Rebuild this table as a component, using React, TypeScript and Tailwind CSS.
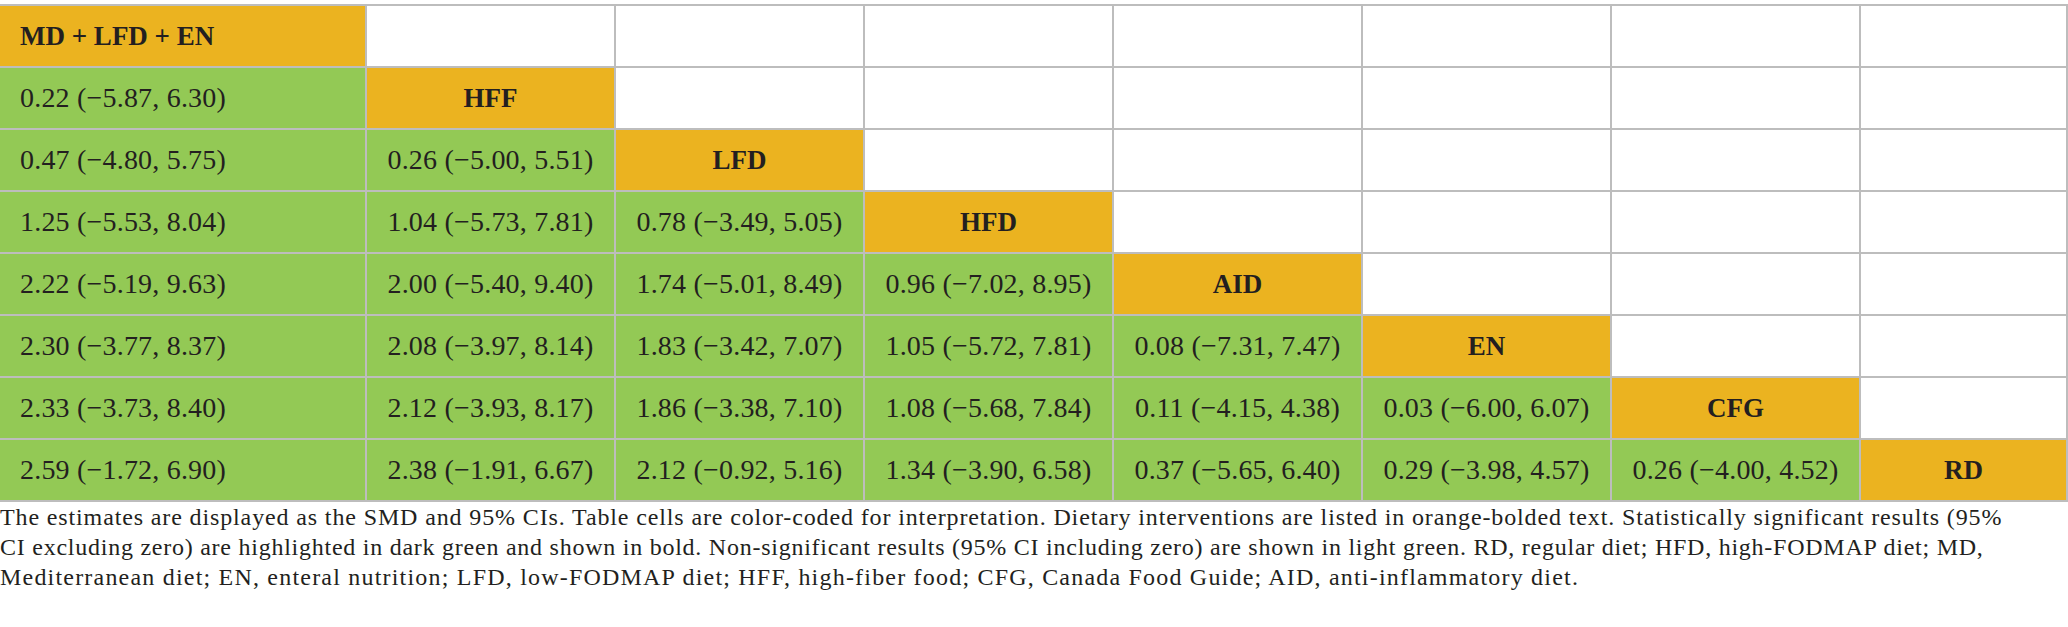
const rows: string[][] = [
  [],
  ["0.22 (−5.87, 6.30)"],
  ["0.47 (−4.80, 5.75)", "0.26 (−5.00, 5.51)"],
  ["1.25 (−5.53, 8.04)", "1.04 (−5.73, 7.81)", "0.78 (−3.49, 5.05)"],
  ["2.22 (−5.19, 9.63)", "2.00 (−5.40, 9.40)", "1.74 (−5.01, 8.49)", "0.96 (−7.02, 8.95)"],
  ["2.30 (−3.77, 8.37)", "2.08 (−3.97, 8.14)", "1.83 (−3.42, 7.07)", "1.05 (−5.72, 7.81)", "0.08 (−7.31, 7.47)"],
  ["2.33 (−3.73, 8.40)", "2.12 (−3.93, 8.17)", "1.86 (−3.38, 7.10)", "1.08 (−5.68, 7.84)", "0.11 (−4.15, 4.38)", "0.03 (−6.00, 6.07)"],
  ["2.59 (−1.72, 6.90)", "2.38 (−1.91, 6.67)", "2.12 (−0.92, 5.16)", "1.34 (−3.90, 6.58)", "0.37 (−5.65, 6.40)", "0.29 (−3.98, 4.57)", "0.26 (−4.00, 4.52)"],
];

const diets = ["MD + LFD + EN", "HFF", "LFD", "HFD", "AID", "EN", "CFG", "RD"];
const widths = [366, 249, 249, 249, 249, 249, 249, 207];

function App() {
  return (
    <div className="w-[2068px] bg-white pt-[4px] text-[#231f20] [font-family:Liberation_Serif,serif]">
      <table className="table-fixed border-collapse w-[2067px] [font-family:Liberation_Serif,serif] text-[#231f20]">
        <colgroup>
          {widths.map((w, i) => (
            <col key={i} style={{ width: w }} />
          ))}
        </colgroup>
        <tbody>
          {rows.map((cells, r) => (
            <tr key={r} className="h-[62px]">
              {widths.map((_, c) => {
                const first = c === 0 ? "border-l-0 text-left pl-[20px]" : "text-center";
                if (c < r) {
                  return (
                    <td key={c} className={`border-2 border-[#bdbdbd] bg-[#93c955] text-[28px] tracking-[0.2px] leading-none whitespace-nowrap ${first}`}>
                      {cells[c]}
                    </td>
                  );
                }
                if (c === r) {
                  return (
                    <td key={c} className={`border-2 border-[#bdbdbd] bg-[#ebb320] text-[27px] font-bold leading-none whitespace-nowrap ${first}`}>
                      {diets[r]}
                    </td>
                  );
                }
                return <td key={c} className="border-2 border-[#bdbdbd] bg-white"></td>;
              })}
            </tr>
          ))}
        </tbody>
      </table>

      {/* legend */}
      <div className="text-[24px] leading-[30px] whitespace-nowrap">
        <div className="tracking-[0.87px]">
          The estimates are displayed as the SMD and 95% CIs. Table cells are color-coded for interpretation. Dietary interventions are listed in orange-bolded text. Statistically significant results (95%
        </div>
        <div className="tracking-[0.75px]">
          CI excluding zero) are highlighted in dark green and shown in bold. Non-significant results (95% CI including zero) are shown in light green. RD, regular diet; HFD, high-FODMAP diet; MD,
        </div>
        <div className="tracking-[1.2px]">
          Mediterranean diet; EN, enteral nutrition; LFD, low-FODMAP diet; HFF, high-fiber food; CFG, Canada Food Guide; AID, anti-inflammatory diet.
        </div>
      </div>
    </div>
  );
}

export default App;
